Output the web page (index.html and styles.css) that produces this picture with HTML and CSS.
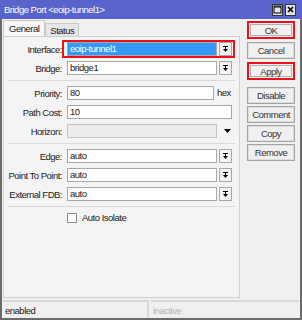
FILE: index.html
```html
<!DOCTYPE html>
<html lang="en">
<head>
    <meta charset="UTF-8">
    <meta name="viewport" content="width=device-width, initial-scale=1.0">
    <title>Bridge Port</title>
    <link rel="stylesheet" href="styles.css">
</head>
<body>
    <div class="window">
        <div class="titlebar">
            <span class="title">Bridge Port &lt;eoip-tunnel1&gt;</span>
            <span class="tb-buttons">
                <span class="tb-btn">
                    <svg width="9" height="9" viewBox="0 0 9 9"><rect x="1" y="1" width="7" height="7" fill="none" stroke="#000"/><path d="M1 2h7" stroke="#000"/></svg>
                </span>
                <span class="tb-btn">
                    <svg width="9" height="9" viewBox="0 0 9 9"><path d="M2 2l5 5M7 2l-5 5" stroke="#000" stroke-width="1.6"/></svg>
                </span>
            </span>
        </div>

        <div class="frame">
            <div class="content">
                <div class="main">
                    <div class="tabs">
                        <span class="tab active">General</span>
                        <span class="tab">Status</span>
                    </div>
                    <div class="panel">
                        <div class="row">
                            <label>Interface:</label>
                            <div class="field marked">
                                <span class="input selected">eoip-tunnel1</span>
                                <span class="drop"><svg width="5" height="7" viewBox="0 0 5 7"><path d="M0 .5h5M2.5 1v2" stroke="#000"/><path d="M0 3h5L2.5 6z"/></svg></span>
                            </div>
                        </div>
                        <div class="row">
                            <label>Bridge:</label>
                            <div class="field">
                                <span class="input">bridge1</span>
                                <span class="drop"><svg width="5" height="7" viewBox="0 0 5 7"><path d="M0 .5h5M2.5 1v2" stroke="#000"/><path d="M0 3h5L2.5 6z"/></svg></span>
                            </div>
                        </div>

                        <div class="sep"></div>

                        <div class="row">
                            <label>Priority:</label>
                            <div class="field">
                                <span class="input short">80</span>
                                <span class="unit">hex</span>
                            </div>
                        </div>
                        <div class="row">
                            <label>Path Cost:</label>
                            <div class="field">
                                <span class="input">10</span>
                            </div>
                        </div>
                        <div class="row">
                            <label>Horizon:</label>
                            <div class="field">
                                <span class="input disabled"></span>
                                <span class="arrow"><svg width="7" height="4" viewBox="0 0 7 4"><path d="M0 0h7L3.5 4z"/></svg></span>
                            </div>
                        </div>

                        <div class="sep"></div>

                        <div class="row">
                            <label>Edge:</label>
                            <div class="field">
                                <span class="input">auto</span>
                                <span class="drop"><svg width="5" height="7" viewBox="0 0 5 7"><path d="M0 .5h5M2.5 1v2" stroke="#000"/><path d="M0 3h5L2.5 6z"/></svg></span>
                            </div>
                        </div>
                        <div class="row">
                            <label>Point To Point:</label>
                            <div class="field">
                                <span class="input">auto</span>
                                <span class="drop"><svg width="5" height="7" viewBox="0 0 5 7"><path d="M0 .5h5M2.5 1v2" stroke="#000"/><path d="M0 3h5L2.5 6z"/></svg></span>
                            </div>
                        </div>
                        <div class="row">
                            <label>External FDB:</label>
                            <div class="field">
                                <span class="input">auto</span>
                                <span class="drop"><svg width="5" height="7" viewBox="0 0 5 7"><path d="M0 .5h5M2.5 1v2" stroke="#000"/><path d="M0 3h5L2.5 6z"/></svg></span>
                            </div>
                        </div>

                        <div class="sep"></div>

                        <div class="check-row">
                            <span class="checkbox"></span>
                            <span>Auto Isolate</span>
                        </div>
                    </div>
                </div>

                <div class="side">
                    <div class="btn-group">
                        <span class="btn marked">OK</span>
                        <span class="btn">Cancel</span>
                        <span class="btn marked">Apply</span>
                    </div>
                    <div class="btn-group second">
                        <span class="btn">Disable</span>
                        <span class="btn">Comment</span>
                        <span class="btn">Copy</span>
                        <span class="btn">Remove</span>
                    </div>
                </div>
            </div>

            <div class="statusbar">
                <span class="cell first">enabled</span>
                <span class="cell dim">inactive</span>
            </div>
        </div>
    </div>
</body>
</html>
```
FILE: styles.css
```css
body {
    margin: 0;
    background-color: #f0f0f0;
    font-family: "Liberation Sans", Arial, sans-serif;
    font-size: 9.5px;
    letter-spacing: -0.5px;
    color: #1a1a1a;
}

.window {
    width: 302px;
    height: 320px;
    display: flex;
    flex-direction: column;
}

.titlebar {
    height: 19px;
    flex-shrink: 0;
    background-color: #5864cb;
    color: #ffffff;
    font-size: 9.5px;
    display: flex;
    align-items: center;
    justify-content: space-between;
    padding: 0 6px 0 4px;
}

.tb-buttons {
    display: flex;
    gap: 2px;
}

.tb-btn {
    width: 11px;
    height: 12px;
    box-sizing: border-box;
    border: 1px solid #333333;
    background-color: #e4e4e4;
    display: flex;
    align-items: center;
    justify-content: center;
}

.frame {
    flex: 1;
    display: flex;
    flex-direction: column;
    border: 2px solid #6b6b6b;
    border-top: 0;
}

.content {
    flex: 1;
    display: flex;
}

.main {
    width: 237px;
    margin-left: 1px;
    display: flex;
    flex-direction: column;
}

.tabs {
    height: 17px;
    display: flex;
    align-items: flex-end;
}

.tab {
    height: 13px;
    padding: 0 4px;
    box-sizing: border-box;
    border: 1px solid #c9c9c9;
    border-bottom: 0;
    background-color: #e6e6e6;
    display: flex;
    align-items: center;
}

.tab.active {
    height: 16px;
    padding: 0 5px 0 5px;
    background-color: #f7f7f7;
}

.panel {
    flex: 1;
    margin-bottom: 2px;
    padding-top: 5px;
    border: 1px solid #d0d0d0;
    background-color: #f4f4f4;
}

.row {
    display: flex;
    align-items: center;
    height: 14px;
    margin-bottom: 5px;
}

.row label {
    width: 58px;
    margin-right: 5px;
    text-align: right;
    white-space: nowrap;
}

.field {
    position: relative;
    width: 165px;
    height: 14px;
    display: flex;
    gap: 2px;
}

.field.marked::after {
    content: "";
    position: absolute;
    top: -2px;
    bottom: -2px;
    left: -5px;
    right: -3px;
    border: 2px solid #e8121b;
}

.input {
    flex: 1;
    height: 14px;
    box-sizing: border-box;
    padding-left: 2px;
    border: 1px solid #a8a8a8;
    background-color: #ffffff;
    line-height: 12px;
}

.input.selected {
    background-color: #3399ff;
    color: #ffffff;
}

.input.short {
    flex: none;
    width: 147px;
}

.input.disabled {
    flex: none;
    width: 150px;
    background-color: #ececec;
    border-color: #c2c2c2;
}

.unit {
    margin-left: 1px;
    line-height: 14px;
}

.drop {
    width: 13px;
    box-sizing: border-box;
    border: 1px solid #a8a8a8;
    background-color: #f4f4f4;
    display: flex;
    align-items: center;
    justify-content: center;
}

.arrow {
    margin-left: 5px;
    display: flex;
    align-items: center;
}

.sep {
    height: 1px;
    margin: 2px 4px 5px 4px;
    background-color: #d8d8d8;
}

.check-row {
    display: flex;
    align-items: center;
    height: 11px;
    margin-left: 63px;
    gap: 5px;
}

.checkbox {
    width: 10px;
    height: 10px;
    box-sizing: border-box;
    border: 1px solid #8e8e8e;
    background-color: #ffffff;
}

.side {
    width: 48px;
    margin-left: 7px;
    padding-top: 2px;
}

.btn-group {
    display: flex;
    flex-direction: column;
    gap: 3px;
}

.btn-group.second {
    margin-top: 7px;
    gap: 2px;
}

.btn {
    height: 17px;
    box-sizing: border-box;
    border: 1px solid #a3a3a3;
    box-shadow: inset 0 0 0 1px #dddddd;
    background-color: #f0f0f0;
    color: #333333;
    display: flex;
    align-items: center;
    justify-content: center;
}

.btn.marked {
    height: 18px;
    border: 2px solid #e8121b;
    box-shadow: inset 0 0 0 1px #f0f0f0, inset 0 0 0 2px #b0b0b0;
}

.statusbar {
    height: 18px;
    flex-shrink: 0;
    display: flex;
    gap: 2px;
    padding: 0 1px;
}

.cell {
    flex: 1;
    border-top: 2px solid #d8d8d8;
    padding-left: 2px;
    display: flex;
    align-items: center;
}

.cell.first {
    flex: none;
    width: 142px;
    border-right: 2px solid #d8d8d8;
}

.cell.dim {
    color: #b4b4b4;
}
```
